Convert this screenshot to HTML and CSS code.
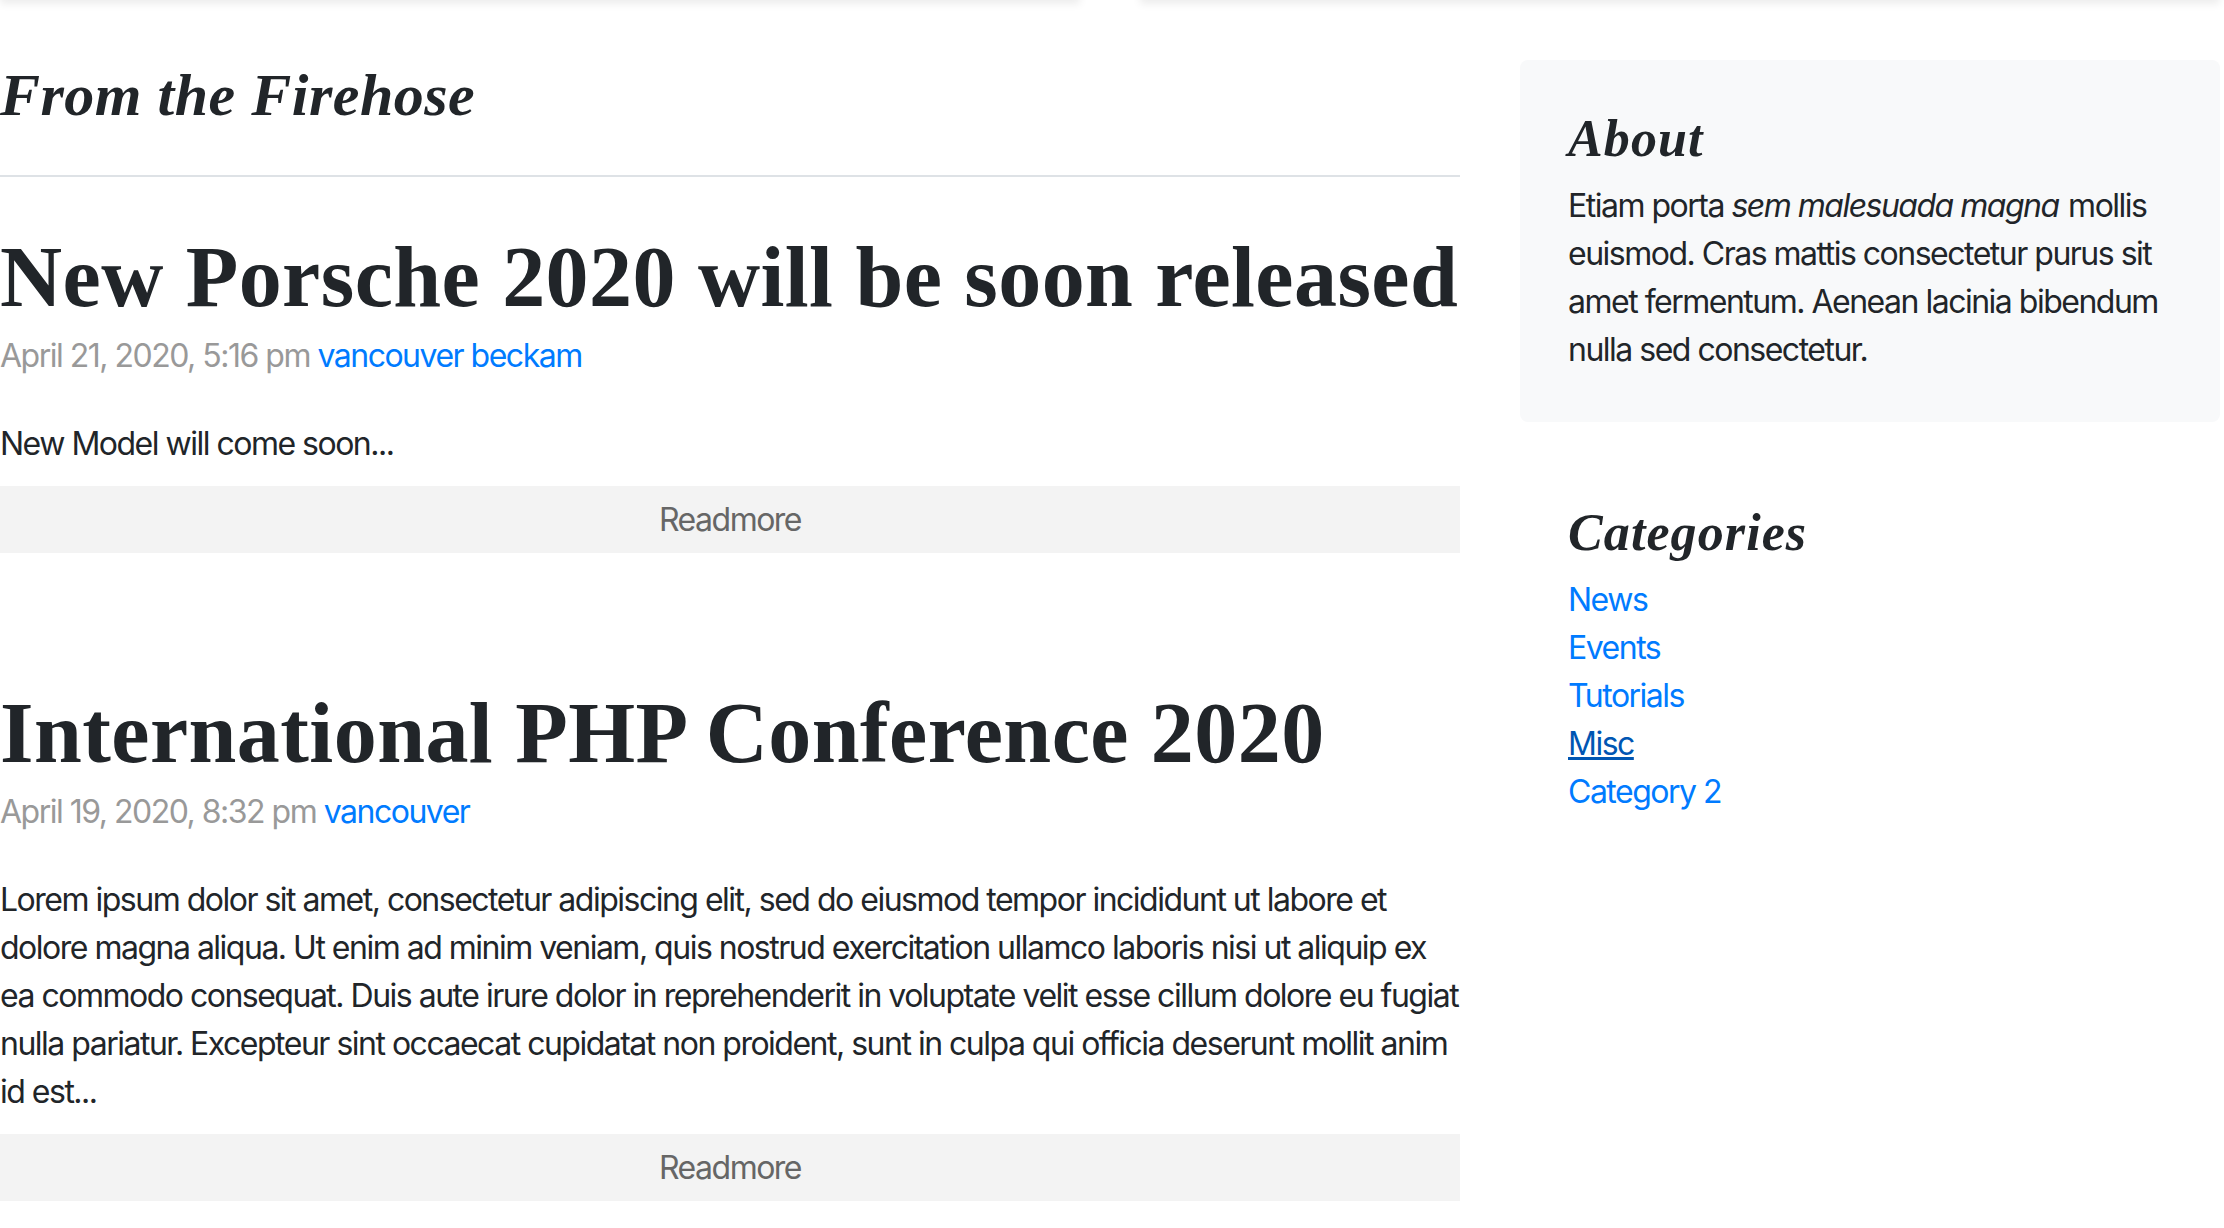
FILE: index.html
```html
<!DOCTYPE html>
<html lang="en">
<head>
<meta charset="utf-8">
<title>Blog</title>
<link rel="stylesheet" href="styles.css">
</head>
<body>
<div class="page">
  <div class="featured">
    <div class="card"></div>
    <div class="card"></div>
  </div>
  <div class="row">
    <main class="blog-main">
      <h3 class="section-title">From the Firehose</h3>
      <article class="blog-post">
        <h2 class="post-title">New Porsche 2020 will be soon released</h2>
        <p class="post-meta">April 21, 2020, 5:16 pm <a href="#">vancouver beckam</a></p>
        <p class="post-body">New Model will come soon...</p>
        <a class="readmore" href="#">Readmore</a>
      </article>
      <article class="blog-post">
        <h2 class="post-title">International PHP Conference 2020</h2>
        <p class="post-meta">April 19, 2020, 8:32 pm <a href="#">vancouver</a></p>
        <p class="post-body">Lorem ipsum dolor sit amet, consectetur adipiscing elit, sed do eiusmod tempor incididunt ut labore et dolore magna aliqua. Ut enim ad minim veniam, quis nostrud exercitation ullamco laboris nisi ut aliquip ex ea commodo consequat. Duis aute irure dolor in reprehenderit in voluptate velit esse cillum dolore eu fugiat nulla pariatur. Excepteur sint occaecat cupidatat non proident, sunt in culpa qui officia deserunt mollit anim id est...</p>
        <a class="readmore" href="#">Readmore</a>
      </article>
    </main>
    <aside class="sidebar">
      <div class="about">
        <h4 class="side-title">About</h4>
        <p class="about-text">Etiam porta <em>sem malesuada magna</em> mollis euismod. Cras mattis consectetur purus sit amet fermentum. Aenean lacinia bibendum nulla sed consectetur.</p>
      </div>
      <div class="categories">
        <h4 class="side-title">Categories</h4>
        <ol class="cat-list">
          <li><a href="#">News</a></li>
          <li><a href="#">Events</a></li>
          <li><a href="#">Tutorials</a></li>
          <li><a class="active" href="#">Misc</a></li>
          <li><a href="#">Category 2</a></li>
        </ol>
      </div>
    </aside>
  </div>
</div>
</body>
</html>
```
FILE: styles.css
```css
html, body {
  margin: 0;
  padding: 0;
  background: #fff;
}

body {
  font-family: Inter, "Liberation Sans", sans-serif;
  font-size: 32px;
  line-height: 48px;
  letter-spacing: -1.5px;
  color: #212529;
  overflow: hidden;
}

a {
  color: #007bff;
  text-decoration: none;
}

.page {
  width: 2220px;
}

.featured {
  display: flex;
  gap: 60px;
  height: 100px;
  margin-top: -100px;
  margin-bottom: 60px;
}

.card {
  flex: 1;
  background: #fff;
  box-shadow: 0 4px 8px rgba(0, 0, 0, 0.075);
}

.row {
  display: flex;
  gap: 60px;
  align-items: flex-start;
}

.blog-main {
  width: 1460px;
  flex: none;
}

.sidebar {
  width: 700px;
  flex: none;
}

.section-title,
.post-title,
.side-title {
  font-family: "Liberation Serif", "Times New Roman", serif;
  font-weight: 700;
  color: #212529;
}

.section-title {
  font-style: italic;
  font-size: 60px;
  line-height: 67px;
  letter-spacing: 0.5px;
  margin: 0 0 48px;
  padding: 2px 0 46px;
  border-bottom: 2px solid #dee2e6;
}

.blog-post {
  margin-bottom: 128px;
}

.post-title {
  font-size: 86px;
  line-height: 96px;
  letter-spacing: 0.45px;
  margin: 0 0 7px;
  padding-top: 4px;
}

.post-meta {
  margin: 0 0 40px;
  color: #999;
}

.post-body {
  margin: 0 0 18px;
}

.readmore {
  display: block;
  background: #f3f3f3;
  color: #666;
  text-align: center;
  line-height: 67px;
}

.about {
  background: #f8f9fa;
  border-radius: 8px;
  padding: 48px;
  margin-bottom: 32px;
}

.side-title {
  font-style: italic;
  font-size: 52px;
  line-height: 58px;
  letter-spacing: 1.1px;
  margin: 0 0 14px;
  padding-top: 2px;
}

.about-text {
  margin: 0;
}

.about-text em {
  padding-right: 2px;
}

.categories {
  padding: 48px;
}

.cat-list {
  list-style: none;
  margin: 0;
  padding: 0;
}

.cat-list .active {
  color: #0056b3;
  text-decoration: underline;
}
```
